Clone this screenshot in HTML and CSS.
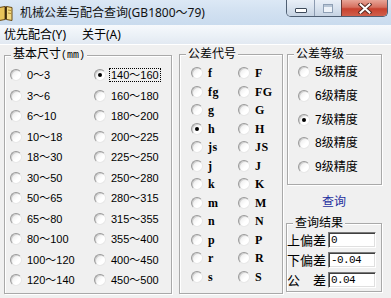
FILE: index.html
```html
<!DOCTYPE html>
<html lang="zh-CN">
<head>
<meta charset="utf-8">
<title>机械公差与配合查询</title>
<link rel="stylesheet" href="styles.css">
</head>
<body>
<div class="window">
  <div class="titlebar">
    <svg class="appicon" width="14" height="16" viewBox="0 0 14 16">
      <path d="M0.5 2.5 L6 1.5 L6 14.5 L0.5 15.5 Z" fill="#e8c35a" stroke="#6b4a12" stroke-width="1"/>
      <path d="M7.5 1.5 L13 2.5 L13 15.5 L7.5 14.5 Z" fill="#f3d981" stroke="#6b4a12" stroke-width="1"/>
      <rect x="6" y="1.5" width="1.5" height="13" fill="#3a2a10"/>
      <path d="M9 5 L12 5.5 M9 8 L12 8.5" stroke="#b08a30" stroke-width="1"/>
    </svg>
    <span class="title">机械公差与配合查询(GB1800～79)</span>
    <div class="caption">
      <span class="cbtn cmin"><span class="min-bar"></span></span>
      <span class="cbtn cmax"><span class="max-box"></span></span>
      <span class="cbtn cclose">
        <svg width="14" height="11" viewBox="0 0 14 11">
          <path d="M2.5 1.5 L11.5 9.5 M11.5 1.5 L2.5 9.5" stroke="#5a2a22" stroke-width="4" stroke-linecap="square"/>
          <path d="M2.5 1.5 L11.5 9.5 M11.5 1.5 L2.5 9.5" stroke="#ffffff" stroke-width="2" stroke-linecap="square"/>
        </svg>
      </span>
    </div>
  </div>
  <div class="menubar">
    <span class="menu-item">优先配合(Y)</span>
    <span class="menu-item">关于(A)</span>
  </div>
  <div class="client">
    <fieldset class="group g-size">
      <legend>基本尺寸<span class="mm">(mm)</span></legend>
      <div class="size-grid">
        <label class="radio"><span class="dot"></span><span class="txt">0～3</span></label>
        <label class="radio"><span class="dot"></span><span class="txt">3～6</span></label>
        <label class="radio"><span class="dot"></span><span class="txt">6～10</span></label>
        <label class="radio"><span class="dot"></span><span class="txt">10～18</span></label>
        <label class="radio"><span class="dot"></span><span class="txt">18～30</span></label>
        <label class="radio"><span class="dot"></span><span class="txt">30～50</span></label>
        <label class="radio"><span class="dot"></span><span class="txt">50～65</span></label>
        <label class="radio"><span class="dot"></span><span class="txt">65～80</span></label>
        <label class="radio"><span class="dot"></span><span class="txt">80～100</span></label>
        <label class="radio"><span class="dot"></span><span class="txt">100～120</span></label>
        <label class="radio"><span class="dot"></span><span class="txt">120～140</span></label>
        <label class="radio"><span class="dot on"></span><span class="txt focus">140～160</span></label>
        <label class="radio"><span class="dot"></span><span class="txt">160～180</span></label>
        <label class="radio"><span class="dot"></span><span class="txt">180～200</span></label>
        <label class="radio"><span class="dot"></span><span class="txt">200～225</span></label>
        <label class="radio"><span class="dot"></span><span class="txt">225～250</span></label>
        <label class="radio"><span class="dot"></span><span class="txt">250～280</span></label>
        <label class="radio"><span class="dot"></span><span class="txt">280～315</span></label>
        <label class="radio"><span class="dot"></span><span class="txt">315～355</span></label>
        <label class="radio"><span class="dot"></span><span class="txt">355～400</span></label>
        <label class="radio"><span class="dot"></span><span class="txt">400～450</span></label>
        <label class="radio"><span class="dot"></span><span class="txt">450～500</span></label>
      </div>
    </fieldset>

    <fieldset class="group g-code">
      <legend>公差代号</legend>
      <div class="code-grid">
        <label class="radio"><span class="dot"></span><span class="txt">f</span></label>
        <label class="radio"><span class="dot"></span><span class="txt">fg</span></label>
        <label class="radio"><span class="dot"></span><span class="txt">g</span></label>
        <label class="radio"><span class="dot on"></span><span class="txt">h</span></label>
        <label class="radio"><span class="dot"></span><span class="txt">js</span></label>
        <label class="radio"><span class="dot"></span><span class="txt">j</span></label>
        <label class="radio"><span class="dot"></span><span class="txt">k</span></label>
        <label class="radio"><span class="dot"></span><span class="txt">m</span></label>
        <label class="radio"><span class="dot"></span><span class="txt">n</span></label>
        <label class="radio"><span class="dot"></span><span class="txt">p</span></label>
        <label class="radio"><span class="dot"></span><span class="txt">r</span></label>
        <label class="radio"><span class="dot"></span><span class="txt">s</span></label>
        <label class="radio"><span class="dot"></span><span class="txt">F</span></label>
        <label class="radio"><span class="dot"></span><span class="txt">FG</span></label>
        <label class="radio"><span class="dot"></span><span class="txt">G</span></label>
        <label class="radio"><span class="dot"></span><span class="txt">H</span></label>
        <label class="radio"><span class="dot"></span><span class="txt">JS</span></label>
        <label class="radio"><span class="dot"></span><span class="txt">J</span></label>
        <label class="radio"><span class="dot"></span><span class="txt">K</span></label>
        <label class="radio"><span class="dot"></span><span class="txt">M</span></label>
        <label class="radio"><span class="dot"></span><span class="txt">N</span></label>
        <label class="radio"><span class="dot"></span><span class="txt">P</span></label>
        <label class="radio"><span class="dot"></span><span class="txt">R</span></label>
        <label class="radio"><span class="dot"></span><span class="txt">S</span></label>
      </div>
    </fieldset>

    <div class="side">
      <fieldset class="group g-grade">
        <legend>公差等级</legend>
        <div class="grade-list">
          <label class="radio"><span class="dot"></span><span class="txt">5级精度</span></label>
          <label class="radio"><span class="dot"></span><span class="txt">6级精度</span></label>
          <label class="radio"><span class="dot on"></span><span class="txt">7级精度</span></label>
          <label class="radio"><span class="dot"></span><span class="txt">8级精度</span></label>
          <label class="radio"><span class="dot"></span><span class="txt">9级精度</span></label>
        </div>
      </fieldset>
      <div class="query">查询</div>
      <fieldset class="group g-result">
        <legend>查询结果</legend>
        <div class="result-grid">
          <span class="rlabel">上偏差</span><span class="field">0</span>
          <span class="rlabel">下偏差</span><span class="field">-0.04</span>
          <span class="rlabel split"><span>公</span><span>差</span></span><span class="field">0.04</span>
        </div>
      </fieldset>
    </div>
  </div>
</div>
</body>
</html>
```

FILE: styles.css
```css
html, body {
  margin: 0;
  padding: 0;
  background: #f0f0f0;
}

body {
  font-family: "Noto Sans", "Noto Sans CJK SC", sans-serif;
  color: #000;
}

.window {
  width: 391px;
  height: 298px;
  overflow: hidden;
  background: #f0f0f0;
}

/* ---------- title bar ---------- */
.titlebar {
  height: 25px;
  display: flex;
  align-items: flex-start;
  background: linear-gradient(180deg, #dce8f5 0%, #d2e1f1 45%, #c9dbee 100%);
}

.appicon {
  margin: 5px 0 0 -1px;
  flex: none;
}

.title {
  margin-left: 7px;
  font-size: 12px;
  line-height: 25px;
  color: #111;
  white-space: nowrap;
}

.caption {
  margin-left: auto;
  margin-right: 3px;
  display: flex;
  height: 17px;
  border: 1px solid #4f5f73;
  border-top: none;
  border-radius: 0 0 5px 5px;
  overflow: hidden;
  box-sizing: border-box;
}

.cbtn {
  display: flex;
  align-items: center;
  justify-content: center;
  height: 100%;
}

.cmin {
  width: 27px;
  background: linear-gradient(180deg, #e9eff7 0%, #d8e2ee 50%, #c6d3e2 100%);
  border-right: 1px solid #8c9bb0;
}

.cmax {
  width: 26px;
  background: linear-gradient(180deg, #e9eff7 0%, #d8e2ee 50%, #c6d3e2 100%);
  border-right: 1px solid #6a3a34;
}

.cclose {
  width: 45px;
  background: linear-gradient(180deg, #e8a597 0%, #d6705f 45%, #c8412e 55%, #d0604c 100%);
}

.min-bar {
  width: 10px;
  height: 3px;
  margin-top: 5px;
  background: #fff;
  border: 1px solid #3e4a5a;
  border-radius: 1px;
}

.max-box {
  width: 8px;
  height: 7px;
  border: 1px solid #8fa0b5;
  box-shadow: inset 0 2px 0 #b8c6d6;
  background: #eef3f9;
}

/* ---------- menu bar ---------- */
.menubar {
  height: 19px;
  border-bottom: 1px solid #ffffff;
  display: flex;
  gap: 16px;
  padding-left: 4px;
  background: linear-gradient(180deg, #f6f9fc 0%, #eaf0f6 60%, #e2e9f2 100%);
  font-size: 12px;
  line-height: 19px;
}

/* ---------- client ---------- */
.client {
  display: flex;
  align-items: flex-start;
  height: 253px;
  padding: 1px 0 0 4px;
  box-sizing: border-box;
}

.group {
  margin: 0;
  padding: 0;
  min-width: 0;
  border: 1px solid #a9a9a9;
  box-shadow: inset 1px 1px 0 #ffffff, 1px 1px 0 #ffffff;
  box-sizing: border-box;
}

.group legend {
  margin-left: 6px;
  padding: 0 2px;
  font-size: 12px;
  line-height: 16px;
  background: #f0f0f0;
  white-space: nowrap;
}

.mm {
  font-family: "Liberation Mono", monospace;
  font-size: 10px;
}

.g-size {
  width: 168px;
  height: 248px;
}

.g-code {
  width: 104px;
  height: 248px;
  margin-left: 7px;
}

.side {
  width: 96px;
  margin-left: 3px;
  display: flex;
  flex-direction: column;
}

.g-grade {
  width: 95px;
  height: 139px;
  margin-left: 1px;
}

.g-result {
  width: 96px;
  height: 77px;
}

/* ---------- radios ---------- */
.radio {
  display: flex;
  align-items: center;
  white-space: nowrap;
}

.dot {
  position: relative;
  flex: none;
  width: 12px;
  height: 12px;
  box-sizing: border-box;
  border-radius: 50%;
  border: 1px solid;
  border-color: #9a9a9a #e8e8e8 #e8e8e8 #9a9a9a;
  background: linear-gradient(135deg, #e6e6e6 0%, #ffffff 60%);
  box-shadow: inset 1px 1px 0 #d0d0d0;
  margin-right: 3px;
}

.dot.on::after {
  content: "";
  position: absolute;
  left: 3px;
  top: 3px;
  width: 4px;
  height: 4px;
  border-radius: 50%;
  background: #000;
}

.txt {
  padding: 0 1px;
  border: 1px dotted transparent;
  line-height: 12px;
}

.txt.focus {
  border-color: #000;
}

.size-grid {
  display: grid;
  grid-auto-flow: column;
  grid-template-rows: repeat(11, 20.5px);
  grid-template-columns: 84px 1fr;
  padding-left: 5px;
  margin-top: 1px;
}

.size-grid .txt {
  font-family: "Liberation Sans", "Noto Sans CJK SC", sans-serif;
  font-size: 11px;
}

.code-grid {
  display: grid;
  grid-auto-flow: column;
  grid-template-rows: repeat(12, 18.5px);
  grid-template-columns: 47px 1fr;
  padding-left: 11px;
  margin-top: 2px;
}

.code-grid .txt {
  font-family: "Liberation Serif", serif;
  font-weight: bold;
  font-size: 12px;
  letter-spacing: 0.5px;
}

.grade-list {
  display: grid;
  grid-template-rows: repeat(5, 20px);
  row-gap: 3.75px;
  padding-left: 10px;
}

.grade-list .txt {
  font-family: "Liberation Sans", "Noto Sans CJK SC", sans-serif;
  font-size: 12px;
  line-height: 14px;
}

/* ---------- query ---------- */
.query {
  margin: 8px 0 4px;
  line-height: 18px;
  text-align: center;
  font-size: 12px;
  color: #1e2f9e;
}

.result-grid {
  display: grid;
  grid-template-columns: 41px 48px;
  grid-auto-rows: 18px;
  row-gap: 2px;
  align-items: center;
}

.rlabel {
  font-size: 13px;
  line-height: 18px;
  white-space: nowrap;
}

.rlabel.split {
  display: flex;
  justify-content: space-between;
  width: 39px;
}

.field {
  height: 16px;
  box-sizing: border-box;
  border: 1px solid;
  border-color: #7a7a7a #ffffff #ffffff #7a7a7a;
  box-shadow: inset 1px 1px 0 #404040, inset -1px -1px 0 #e0e0e0;
  background: #fff;
  padding-left: 2px;
  font-family: "Liberation Mono", monospace;
  font-size: 11px;
  letter-spacing: -0.6px;
  line-height: 14px;
}
```
